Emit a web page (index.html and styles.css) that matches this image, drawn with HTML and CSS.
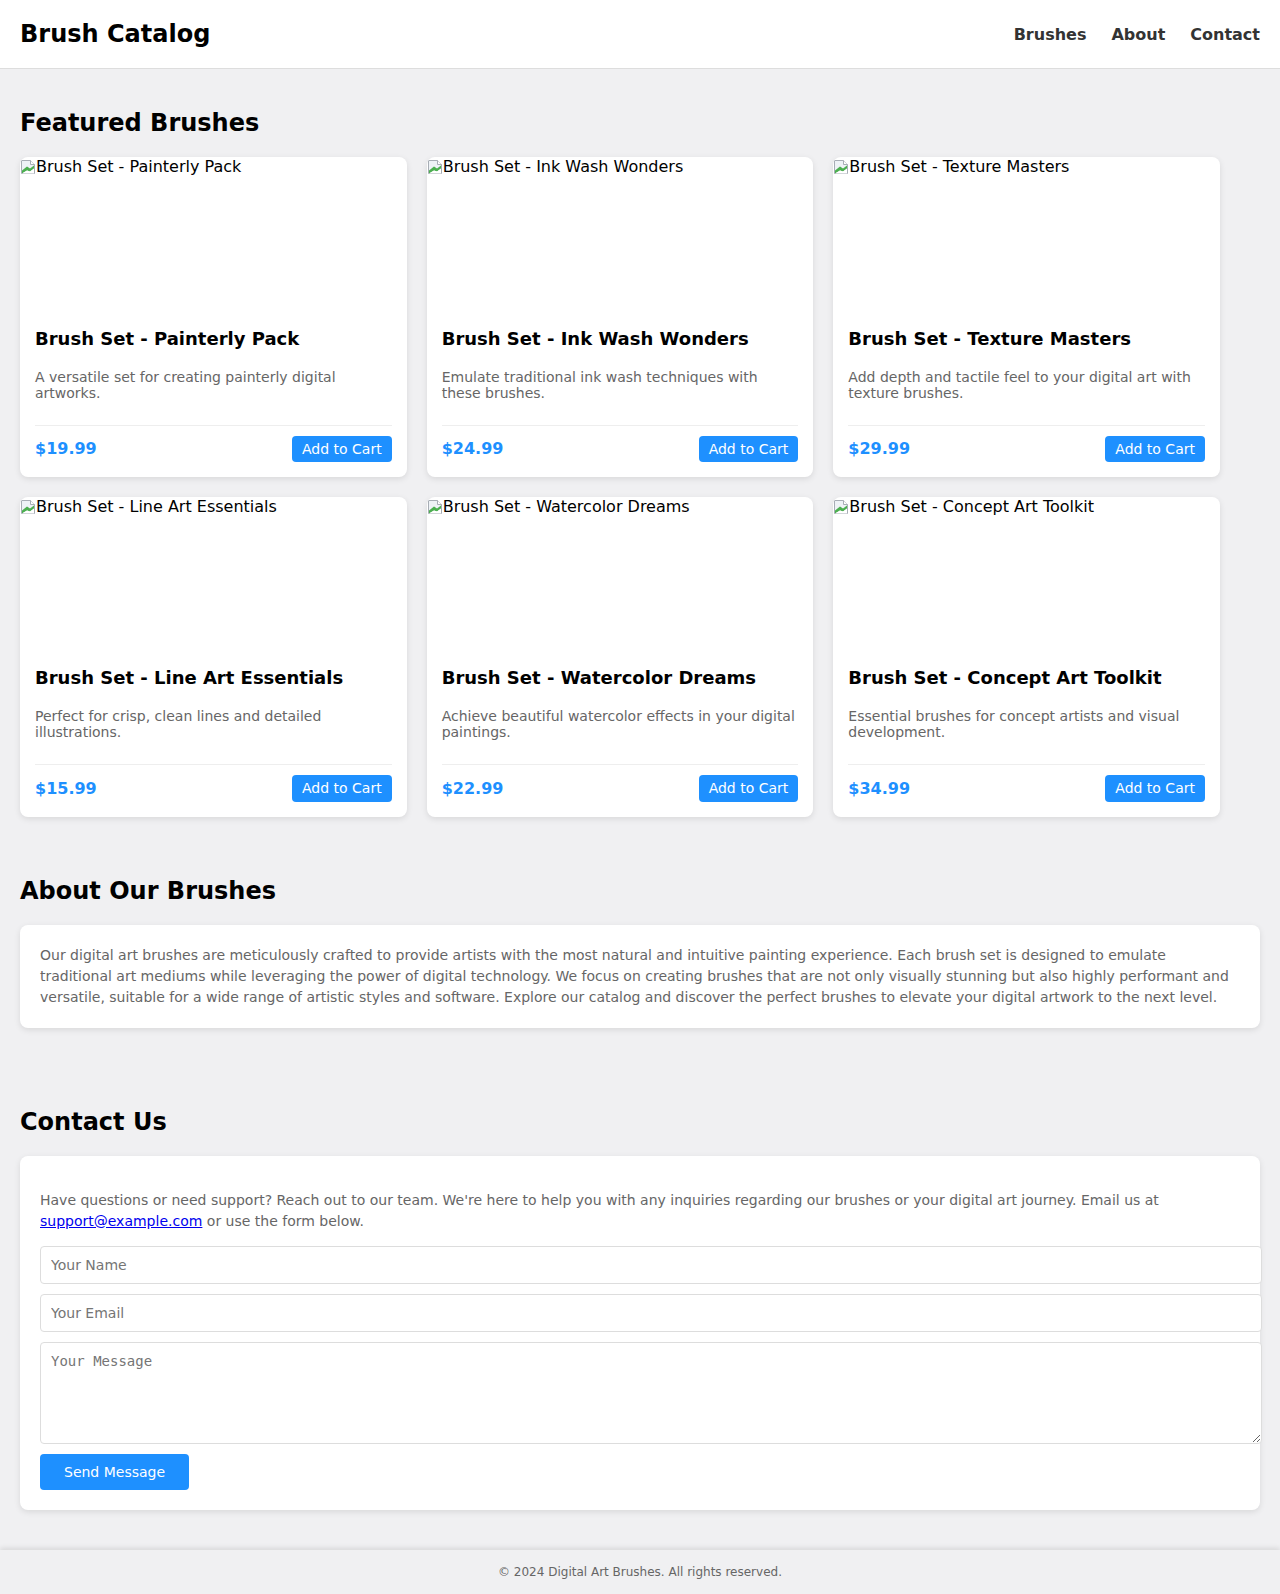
FILE: index.html
```html
<!DOCTYPE html>
<html lang="en">
<head>
<meta charset="utf-8">
<title>Brush Catalog</title>
<link rel="stylesheet" href="styles.css">
</head>
<body>
<header class="site-header">
  <h1 class="logo">Brush Catalog</h1>
  <nav class="nav">
    <a href="#brushes">Brushes</a>
    <a href="#about">About</a>
    <a href="#contact">Contact</a>
  </nav>
</header>

<main class="main">
  <section id="brushes" class="section section-featured">
    <h2>Featured Brushes</h2>
    <div class="grid">
      <div class="card">
        <div class="card-img"><svg class="broken" width="16" height="16" viewBox="0 0 16 16"><path d="M1.5 1.5h9l4 4v9h-13z" fill="#eef2f6" stroke="#a7adb5"/><path d="M10.5 1.5v4h4" fill="#fff" stroke="#a7adb5"/><path d="M2 14.5v-3l5-4 3 2 4-3v3l-4 3-3-1-5 3z" fill="#4caf50"/><path d="M2 14.5l5-3 3 1 4-3v5z" fill="#fff"/></svg><span>Brush Set - Painterly Pack</span></div>
        <div class="card-body">
          <h3>Brush Set - Painterly Pack</h3>
          <p>A versatile set for creating painterly digital artworks.</p>
          <div class="card-foot"><span class="price">$19.99</span><button class="btn-cart">Add to Cart</button></div>
        </div>
      </div>
      <div class="card">
        <div class="card-img"><svg class="broken" width="16" height="16" viewBox="0 0 16 16"><path d="M1.5 1.5h9l4 4v9h-13z" fill="#eef2f6" stroke="#a7adb5"/><path d="M10.5 1.5v4h4" fill="#fff" stroke="#a7adb5"/><path d="M2 14.5v-3l5-4 3 2 4-3v3l-4 3-3-1-5 3z" fill="#4caf50"/><path d="M2 14.5l5-3 3 1 4-3v5z" fill="#fff"/></svg><span>Brush Set - Ink Wash Wonders</span></div>
        <div class="card-body">
          <h3>Brush Set - Ink Wash Wonders</h3>
          <p>Emulate traditional ink wash techniques with these brushes.</p>
          <div class="card-foot"><span class="price">$24.99</span><button class="btn-cart">Add to Cart</button></div>
        </div>
      </div>
      <div class="card">
        <div class="card-img"><svg class="broken" width="16" height="16" viewBox="0 0 16 16"><path d="M1.5 1.5h9l4 4v9h-13z" fill="#eef2f6" stroke="#a7adb5"/><path d="M10.5 1.5v4h4" fill="#fff" stroke="#a7adb5"/><path d="M2 14.5v-3l5-4 3 2 4-3v3l-4 3-3-1-5 3z" fill="#4caf50"/><path d="M2 14.5l5-3 3 1 4-3v5z" fill="#fff"/></svg><span>Brush Set - Texture Masters</span></div>
        <div class="card-body">
          <h3>Brush Set - Texture Masters</h3>
          <p>Add depth and tactile feel to your digital art with texture brushes.</p>
          <div class="card-foot"><span class="price">$29.99</span><button class="btn-cart">Add to Cart</button></div>
        </div>
      </div>
      <div class="card">
        <div class="card-img"><svg class="broken" width="16" height="16" viewBox="0 0 16 16"><path d="M1.5 1.5h9l4 4v9h-13z" fill="#eef2f6" stroke="#a7adb5"/><path d="M10.5 1.5v4h4" fill="#fff" stroke="#a7adb5"/><path d="M2 14.5v-3l5-4 3 2 4-3v3l-4 3-3-1-5 3z" fill="#4caf50"/><path d="M2 14.5l5-3 3 1 4-3v5z" fill="#fff"/></svg><span>Brush Set - Line Art Essentials</span></div>
        <div class="card-body">
          <h3>Brush Set - Line Art Essentials</h3>
          <p>Perfect for crisp, clean lines and detailed illustrations.</p>
          <div class="card-foot"><span class="price">$15.99</span><button class="btn-cart">Add to Cart</button></div>
        </div>
      </div>
      <div class="card">
        <div class="card-img"><svg class="broken" width="16" height="16" viewBox="0 0 16 16"><path d="M1.5 1.5h9l4 4v9h-13z" fill="#eef2f6" stroke="#a7adb5"/><path d="M10.5 1.5v4h4" fill="#fff" stroke="#a7adb5"/><path d="M2 14.5v-3l5-4 3 2 4-3v3l-4 3-3-1-5 3z" fill="#4caf50"/><path d="M2 14.5l5-3 3 1 4-3v5z" fill="#fff"/></svg><span>Brush Set - Watercolor Dreams</span></div>
        <div class="card-body">
          <h3>Brush Set - Watercolor Dreams</h3>
          <p>Achieve beautiful watercolor effects in your digital paintings.</p>
          <div class="card-foot"><span class="price">$22.99</span><button class="btn-cart">Add to Cart</button></div>
        </div>
      </div>
      <div class="card">
        <div class="card-img"><svg class="broken" width="16" height="16" viewBox="0 0 16 16"><path d="M1.5 1.5h9l4 4v9h-13z" fill="#eef2f6" stroke="#a7adb5"/><path d="M10.5 1.5v4h4" fill="#fff" stroke="#a7adb5"/><path d="M2 14.5v-3l5-4 3 2 4-3v3l-4 3-3-1-5 3z" fill="#4caf50"/><path d="M2 14.5l5-3 3 1 4-3v5z" fill="#fff"/></svg><span>Brush Set - Concept Art Toolkit</span></div>
        <div class="card-body">
          <h3>Brush Set - Concept Art Toolkit</h3>
          <p>Essential brushes for concept artists and visual development.</p>
          <div class="card-foot"><span class="price">$34.99</span><button class="btn-cart">Add to Cart</button></div>
        </div>
      </div>
    </div>
  </section>

  <section id="about" class="section section-about">
    <h2>About Our Brushes</h2>
    <div class="panel about-panel">
      <p>Our digital art brushes are meticulously crafted to provide artists with the most natural and intuitive painting experience. Each brush set is designed to emulate traditional art mediums while leveraging the power of digital technology. We focus on creating brushes that are not only visually stunning but also highly performant and versatile, suitable for a wide range of artistic styles and software. Explore our catalog and discover the perfect brushes to elevate your digital artwork to the next level.</p>
    </div>
  </section>

  <section id="contact" class="section section-contact">
    <h2>Contact Us</h2>
    <div class="panel contact-panel">
      <p>Have questions or need support? Reach out to our team. We're here to help you with any inquiries regarding our brushes or your digital art journey. Email us at <a href="mailto:support@example.com">support@example.com</a> or use the form below.</p>
      <form class="form">
        <input type="text" placeholder="Your Name">
        <input type="email" placeholder="Your Email">
        <textarea placeholder="Your Message"></textarea>
        <button type="button" class="btn-send">Send Message</button>
      </form>
    </div>
  </section>
</main>

<footer class="footer">© 2024 Digital Art Brushes. All rights reserved.</footer>
</body>
</html>
```

FILE: styles.css
```css
* { box-sizing: content-box; }

body {
  margin: 0;
  font-family: "DejaVu Sans", sans-serif;
  background: #f0f0f2;
  color: #000;
}

.site-header {
  background: #fff;
  border-bottom: 1px solid #ddd;
  padding: 20px;
  display: flex;
  justify-content: space-between;
  align-items: center;
}

.logo {
  margin: 0;
  font-size: 24px;
  font-weight: bold;
  color: #000;
}

.nav {
  display: flex;
  gap: 25px;
}

.nav a {
  color: #333;
  text-decoration: none;
  font-weight: bold;
  font-size: 16px;
}

.main {
  padding: 20px;
}

.section h2 {
  font-size: 24px;
  margin: 20px 0;
}

.section-featured { margin-bottom: 60px; }
.section-about { margin-bottom: 80px; }
.section-contact { margin-bottom: 20px; }

.grid {
  max-width: 1200px;
  display: grid;
  grid-template-columns: repeat(3, 1fr);
  gap: 20px;
}

.card {
  background: #fff;
  border-radius: 8px;
  box-shadow: 0 2px 6px rgba(0, 0, 0, 0.1);
  overflow: hidden;
}

.card-img {
  height: 149px;
  padding-top: 1px;
  margin-bottom: 5.5px;
  font-size: 16px;
  line-height: 18.6px;
  color: #000;
  display: flex;
  align-items: flex-start;
}

.broken {
  flex: none;
  margin-top: 1px;
}

.card-body {
  padding: 15px;
}

.card-body h3 {
  margin: 0 0 20px;
  font-size: 18px;
}

.card-body p {
  margin: 0 0 24px;
  font-size: 14px;
  color: #666;
}

.card-foot {
  border-top: 1px solid #eee;
  padding-top: 10px;
  display: flex;
  justify-content: space-between;
  align-items: center;
}

.price {
  color: #1e90ff;
  font-weight: bold;
  font-size: 16px;
}

.btn-cart {
  background: #1e90ff;
  color: #fff;
  border: none;
  border-radius: 4px;
  padding: 5px 10px;
  font-family: "DejaVu Sans", sans-serif;
  font-size: 14px;
  line-height: 16.3px;
}

.panel {
  background: #fff;
  border-radius: 8px;
  box-shadow: 0 2px 6px rgba(0, 0, 0, 0.1);
  padding: 20px;
}

.about-panel p {
  margin: 0;
  font-size: 14px;
  line-height: 21px;
  color: #666;
}

.contact-panel p {
  margin: 14px 0;
  font-size: 14px;
  line-height: 21px;
  color: #666;
}

.contact-panel a {
  color: #0000ee;
}

.form input,
.form textarea {
  display: block;
  width: 100%;
  padding: 10px;
  border: 1px solid #ddd;
  border-radius: 4px;
  margin: 0 0 10px;
  font-size: 14px;
  background: #fff;
}

.form input {
  font-family: "DejaVu Sans", sans-serif;
  line-height: 16px;
}

.form textarea {
  font-family: "DejaVu Sans Mono", monospace;
  height: 80px;
}

.form ::placeholder {
  color: #757575;
}

.btn-send {
  display: block;
  background: #1e90ff;
  color: #fff;
  border: none;
  border-radius: 4px;
  padding: 10px 24px;
  font-family: "DejaVu Sans", sans-serif;
  font-size: 14px;
  line-height: 16px;
}

.footer {
  background: #f0f0f2;
  box-shadow: 0 -2px 5px rgba(0, 0, 0, 0.1);
  text-align: center;
  padding: 15px;
  font-size: 12px;
  color: #666;
}
```
